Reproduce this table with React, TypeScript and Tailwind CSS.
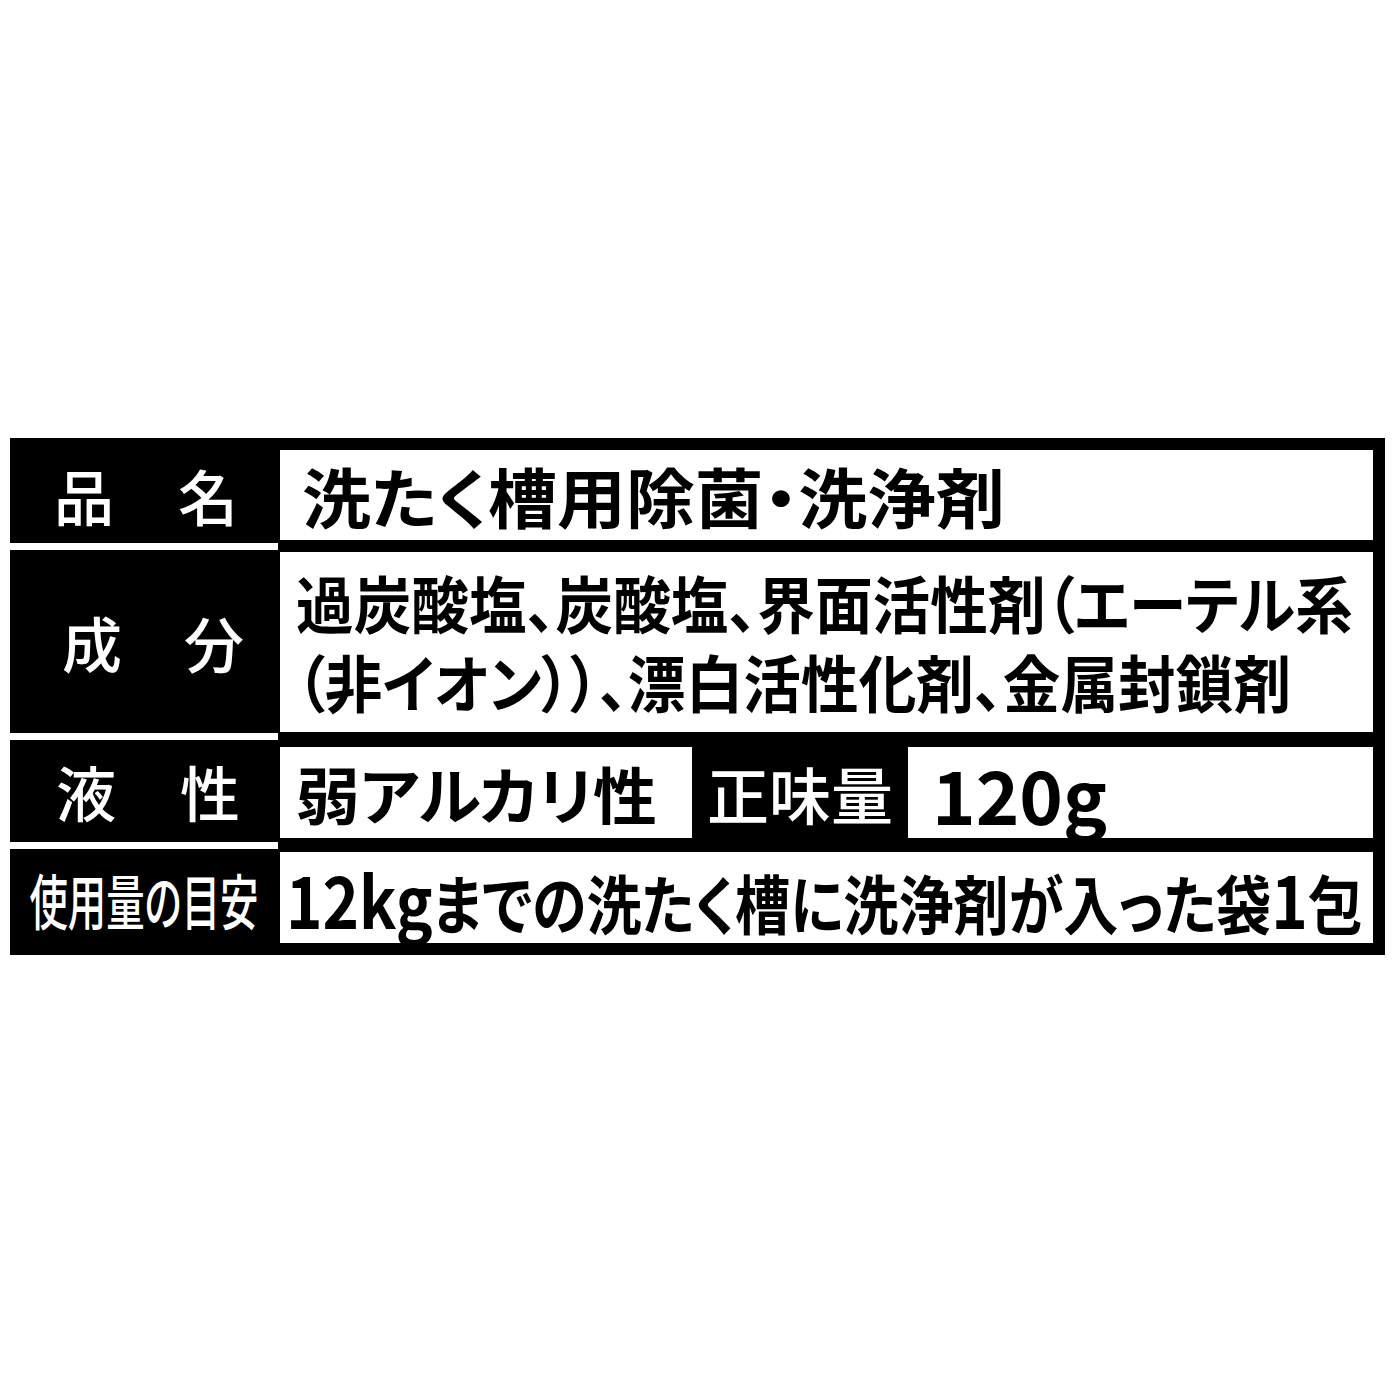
const jp = "font-['Noto_Sans_CJK_JP','Noto_Sans_CJK_SC',sans-serif]"

function Label({ children, className = "" }: { children: React.ReactNode; className?: string }) {
  return (
    <div className={`w-[268px] shrink-0 bg-black text-white font-medium flex items-center ${className}`}>
      {children}
    </div>
  )
}

function Sep() {
  return (
    <div className="flex h-[7px]">
      <div className="w-[268px] bg-white" />
      <div className="w-[1107px] bg-black" />
    </div>
  )
}

export default function App() {
  return (
    <div className={`w-[1400px] h-[1400px] bg-white overflow-hidden ${jp} [font-feature-settings:'palt']`}>
      <div className="pt-[438px] pl-[10px]">
        <div className="flex flex-col w-[1375px]">
          {/* 品名 */}
          <div className="flex h-[105px]">
            <Label className="justify-between pl-[44px] pr-[40px] text-[60px] leading-none pt-[8px]">
              <span>品</span>
              <span>名</span>
            </Label>
            <div className="w-[1107px] shrink-0 bg-black pl-[2px] pr-[12px] pt-[12px] pb-[3px]">
              <div className="h-full min-w-0 bg-white flex items-center pl-[22px] text-black font-bold text-[65px] leading-none whitespace-nowrap">
                <span className="inline-block origin-left scale-x-[1.06]">洗たく槽用除菌・洗浄剤</span>
              </div>
            </div>
          </div>
          <Sep />
          {/* 成分 */}
          <div className="flex h-[183px]">
            <Label className="justify-between pl-[52px] pr-[34px] text-[60px] leading-none">
              <span>成</span>
              <span>分</span>
            </Label>
            <div className="w-[1107px] shrink-0 bg-black pl-[2px] pr-[12px] pt-[2px] pb-[1px]">
              <div className="h-full min-w-0 bg-white flex flex-col justify-center pl-[16px] text-black font-bold text-[62px] leading-[79px] whitespace-nowrap">
                <span className="block origin-left scale-x-[0.93]">過炭酸塩、炭酸塩、界面活性剤（エーテル系</span>
                <span className="block origin-left scale-x-[0.93]">（非イオン））、漂白活性化剤、金属封鎖剤</span>
              </div>
            </div>
          </div>
          <Sep />
          {/* 液性 / 正味量 */}
          <div className="flex h-[102px]">
            <Label className="justify-between pl-[46px] pr-[38px] text-[60px] leading-none">
              <span>液</span>
              <span>性</span>
            </Label>
            <div className="w-[1107px] shrink-0 bg-black pl-[2px] pr-[12px] pt-[7px] pb-[4px] flex">
              <div className="w-[412px] shrink-0 bg-white flex items-center pl-[16px] text-black font-bold text-[62px] leading-none whitespace-nowrap">
                <span className="inline-block origin-left scale-x-[1.03]">弱アルカリ性</span>
              </div>
              <div className="w-[216px] shrink-0 flex items-center justify-center text-white font-medium text-[62px] leading-none whitespace-nowrap">
                正味量
              </div>
              <div className="flex-1 min-w-0 bg-white flex items-center pl-[24px] text-black font-bold text-[74px] leading-none">
                120g
              </div>
            </div>
          </div>
          <Sep />
          {/* 使用量の目安 */}
          <div className="flex h-[106px]">
            <Label className="justify-center text-[60px] leading-none whitespace-nowrap pb-[6px]">
              <span className="inline-block scale-x-[0.64]">使用量の目安</span>
            </Label>
            <div className="w-[1107px] shrink-0 bg-black pl-[2px] pr-[12px] pt-[3px] pb-[12px]">
              <div className="h-full min-w-0 overflow-visible bg-white flex items-center pl-[6px] text-black font-bold text-[64px] leading-none whitespace-nowrap">
                <span className="inline-block origin-left scale-x-[0.86]">
                  <span className="text-[72px]">12kg</span>までの洗たく槽に洗浄剤が入った袋<span className="text-[72px]">1</span>包
                </span>
              </div>
            </div>
          </div>
        </div>
      </div>
    </div>
  )
}
